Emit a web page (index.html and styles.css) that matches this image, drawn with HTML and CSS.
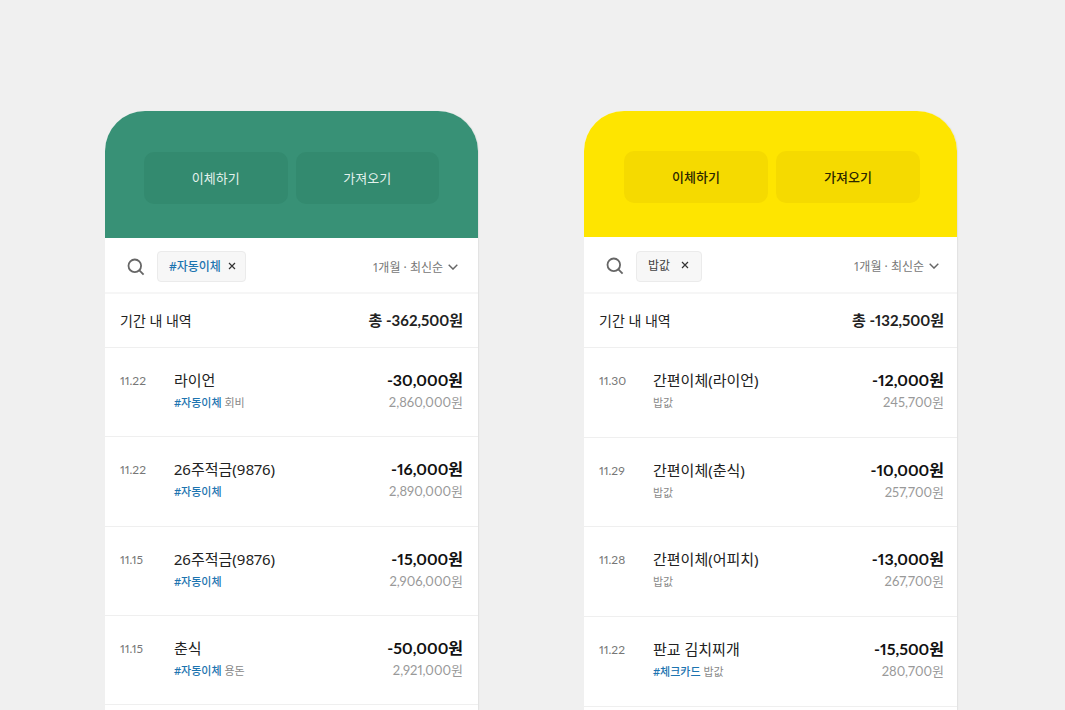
FILE: index.html
```
<!DOCTYPE html>
<html lang="ko">
<head>
<meta charset="utf-8">
<meta name="viewport" content="width=device-width, initial-scale=1">
<title>거래 내역</title>
<link rel="stylesheet" href="styles.css">
</head>
<body>
<main class="board">
  <section class="card card--green">
    <header class="card__head">
      <button class="action" type="button">이체하기</button>
      <button class="action" type="button">가져오기</button>
    </header>
    <div class="filter">
      <button class="icon-button" type="button" aria-label="검색">
        <svg class="search" viewBox="0 0 18 18" aria-hidden="true"><circle cx="7.8" cy="7.8" r="6.3"/><path d="M12.4 12.4l4.2 4.2"/></svg>
      </button>
      <button class="chip chip--tag" type="button">#자동이체<svg class="close" viewBox="0 0 8 8" aria-hidden="true"><path d="M1 1l6 6M7 1L1 7"/></svg></button>
      <button class="sort" type="button">1개월 · 최신순<svg class="chevron" viewBox="0 0 10 6" aria-hidden="true"><path d="M.7.8L5 5.1 9.3.8"/></svg></button>
    </div>
    <div class="summary"><span>기간 내 내역</span><strong class="total">총 -362,500원</strong></div>
    <ul class="list">
      <li class="item"><time class="date">11.22</time><div class="info"><p class="title">라이언</p><p class="memo"><a class="tag" href="#">#자동이체</a> 회비</p></div><div class="money"><p class="amount">-30,000원</p><p class="balance">2,860,000원</p></div></li>
      <li class="item"><time class="date">11.22</time><div class="info"><p class="title">26주적금(9876)</p><p class="memo"><a class="tag" href="#">#자동이체</a></p></div><div class="money"><p class="amount">-16,000원</p><p class="balance">2,890,000원</p></div></li>
      <li class="item"><time class="date">11.15</time><div class="info"><p class="title">26주적금(9876)</p><p class="memo"><a class="tag" href="#">#자동이체</a></p></div><div class="money"><p class="amount">-15,000원</p><p class="balance">2,906,000원</p></div></li>
      <li class="item"><time class="date">11.15</time><div class="info"><p class="title">춘식</p><p class="memo"><a class="tag" href="#">#자동이체</a> 용돈</p></div><div class="money"><p class="amount">-50,000원</p><p class="balance">2,921,000원</p></div></li>
    </ul>
  </section>
  <section class="card card--yellow">
    <header class="card__head">
      <button class="action" type="button">이체하기</button>
      <button class="action" type="button">가져오기</button>
    </header>
    <div class="filter">
      <button class="icon-button" type="button" aria-label="검색">
        <svg class="search" viewBox="0 0 18 18" aria-hidden="true"><circle cx="7.8" cy="7.8" r="6.3"/><path d="M12.4 12.4l4.2 4.2"/></svg>
      </button>
      <button class="chip" type="button">밥값<svg class="close" viewBox="0 0 8 8" aria-hidden="true"><path d="M1 1l6 6M7 1L1 7"/></svg></button>
      <button class="sort" type="button">1개월 · 최신순<svg class="chevron" viewBox="0 0 10 6" aria-hidden="true"><path d="M.7.8L5 5.1 9.3.8"/></svg></button>
    </div>
    <div class="summary"><span>기간 내 내역</span><strong class="total">총 -132,500원</strong></div>
    <ul class="list">
      <li class="item"><time class="date">11.30</time><div class="info"><p class="title">간편이체(라이언)</p><p class="memo">밥값</p></div><div class="money"><p class="amount">-12,000원</p><p class="balance">245,700원</p></div></li>
      <li class="item"><time class="date">11.29</time><div class="info"><p class="title">간편이체(춘식)</p><p class="memo">밥값</p></div><div class="money"><p class="amount">-10,000원</p><p class="balance">257,700원</p></div></li>
      <li class="item"><time class="date">11.28</time><div class="info"><p class="title">간편이체(어피치)</p><p class="memo">밥값</p></div><div class="money"><p class="amount">-13,000원</p><p class="balance">267,700원</p></div></li>
      <li class="item"><time class="date">11.22</time><div class="info"><p class="title">판교 김치찌개</p><p class="memo"><a class="tag" href="#">#체크카드</a> 밥값</p></div><div class="money"><p class="amount">-15,500원</p><p class="balance">280,700원</p></div></li>
    </ul>
  </section>
</main>
</body>
</html>
```
FILE: styles.css
```
* { box-sizing: border-box; }
html { background: #f0f0f0; }
body {
  margin: 0;
  height: 100vh;
  overflow: hidden;
  font-family: "Noto Sans", "Noto Sans CJK KR", sans-serif;
  font-variant-numeric: proportional-nums;
  color: #222;
}
p, ul { margin: 0; padding: 0; }
button { border: 0; padding: 0; background: none; font: inherit; color: inherit; cursor: pointer; }
svg { fill: none; stroke: currentColor; }

.board {
  display: grid;
  grid-template-columns: 1fr 1fr;
  gap: 106px;
  min-height: 100vh;
  padding: 111px 108px 0 105px;
}
.card {
  background: #fff;
  border-radius: 40px 40px 0 0;
  box-shadow: 1px 0 1px #e2e2e2;
}
.card__head {
  display: grid;
  grid-template-columns: 1fr 1fr;
  gap: 8px;
  padding: 41px 39px 34px;
  border-radius: 40px 40px 0 0;
}
.card--green .card__head { background: #389176; color: #e3f1ec; }
.card--yellow .card__head { background: #fee500; padding: 40px 37px 34px 40px; color: #2b2700; }
.action { height: 52px; padding-bottom: 2px; border-radius: 10px; font-size: 13px; }
.card--green .action { background: #338a6f; }
.card--yellow .action { background: #f5da00; font-weight: 500; }

.filter {
  display: flex;
  align-items: center;
  height: 56px;
  padding: 3px 20px 0 22px;
  border-bottom: 2px solid #f6f6f6;
}
.card--yellow .filter { height: 57px; padding-right: 18px; }
.icon-button { display: flex; color: #666; }
.search { width: 18px; height: 18px; stroke-width: 1.8; }
.chip {
  display: flex;
  align-items: center;
  gap: 7px;
  height: 31px;
  margin-left: 12px;
  padding: 0 9px 2px 11px;
  border: 1px solid #ebebeb;
  border-radius: 4px;
  background: #f7f7f7;
  font-size: 12px;
  color: #444;
}
.card--yellow .chip { gap: 11px; padding-right: 12px; }
.chip--tag { color: #1d74b0; font-weight: 500; }
.close { width: 8px; height: 8px; stroke: #333; stroke-width: 1.2; }
.sort {
  display: flex;
  align-items: center;
  gap: 5px;
  margin-left: auto;
  font-size: 12px;
  color: #777;
}
.chevron { width: 10px; height: 6px; stroke: #666; stroke-width: 1.4; }

.summary {
  display: flex;
  align-items: center;
  justify-content: space-between;
  height: 54px;
  padding: 0 15px 2px;
  border-bottom: 1px solid #efefef;
  font-size: 14px;
}
.card--yellow .summary, .card--yellow .item { padding-right: 13px; }

.date, .total, .money { font-family: Lato, "Noto Sans CJK KR", sans-serif; }
.total { font-size: 15px; font-weight: 700; }

.list { list-style: none; }
.item {
  display: grid;
  grid-template-columns: 54px 1fr auto;
  height: 89px;
  padding: 21px 15px 0;
  border-bottom: 1px solid #efefef;
  line-height: 22px;
}
.card--green .item:nth-child(2), .card--yellow .item { height: 90px; }
.card--yellow .item:nth-child(2) { height: 89px; }
.date { font-size: 12px; line-height: 24px; color: #777; }
.title { font-size: 15px; }
.memo { font-size: 11px; line-height: 24px; color: #888; }
.tag { color: #1d74b0; font-weight: 500; text-decoration: none; }
.money { text-align: right; }
.amount { font-size: 16px; font-weight: 700; color: #111; }
.balance { font-size: 13px; color: #999; }
```
